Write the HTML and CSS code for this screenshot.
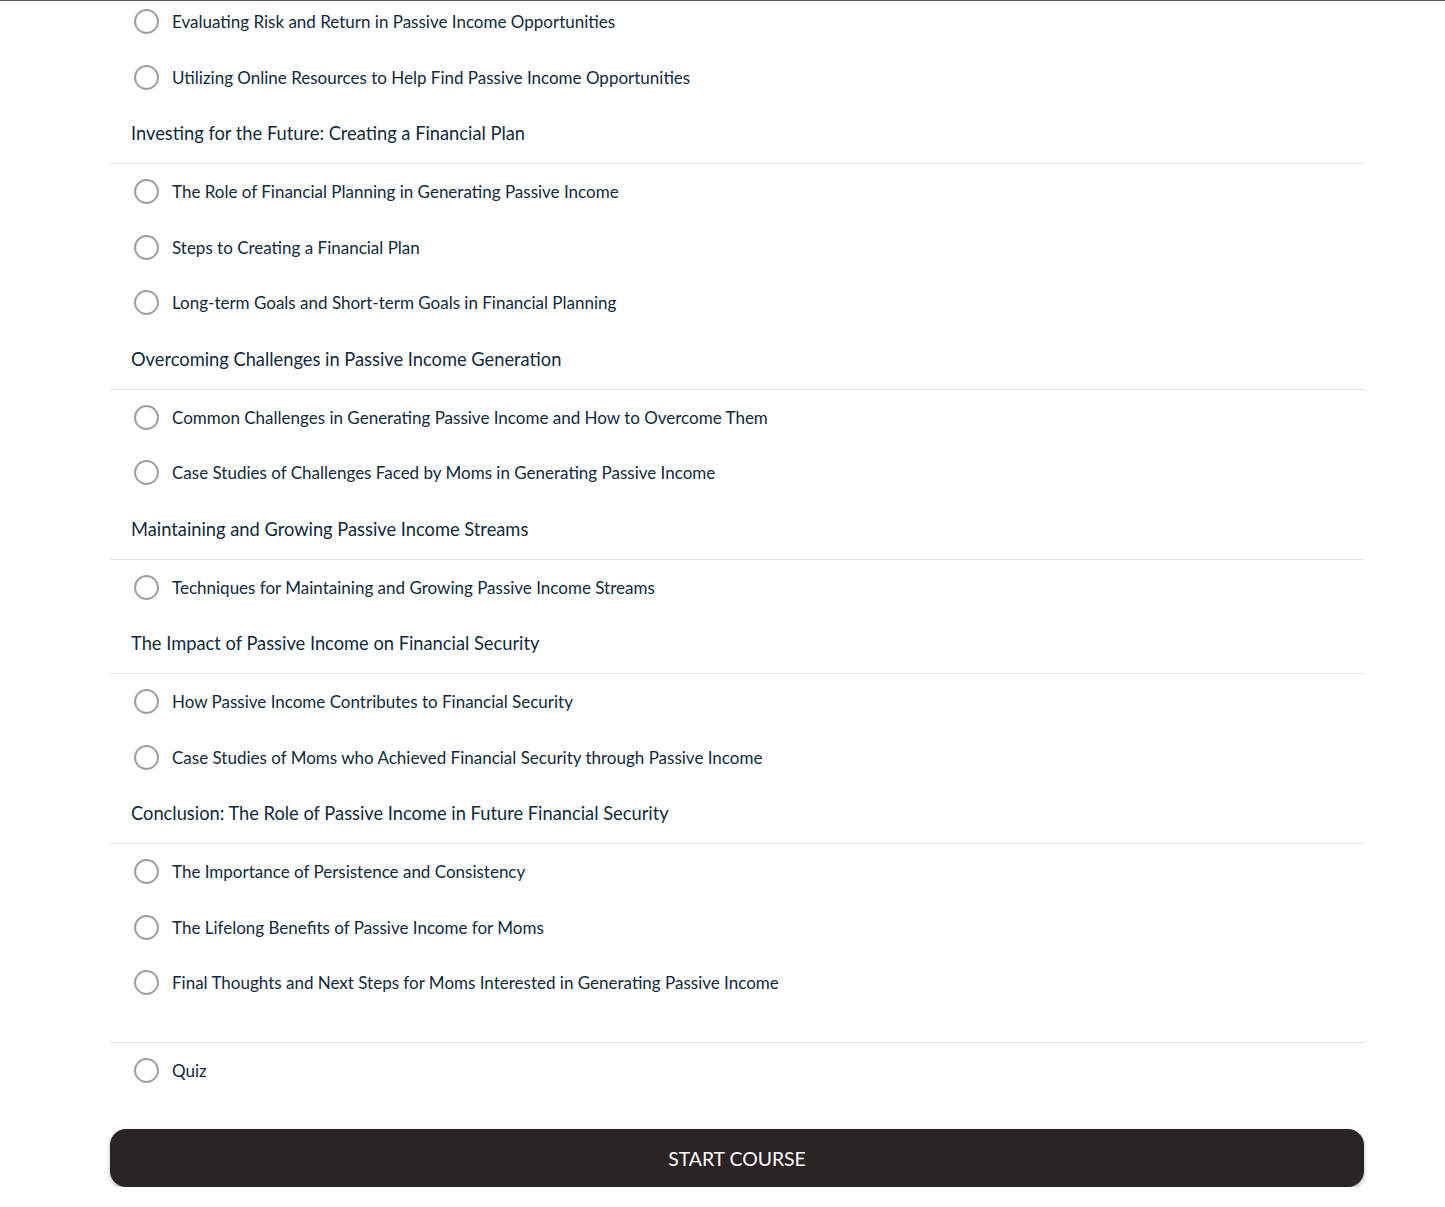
FILE: index.html
```html
<!DOCTYPE html>
<html lang="en">
<head>
    <meta charset="UTF-8">
    <meta name="viewport" content="width=device-width, initial-scale=1.0">
    <title>Course Outline</title>
    <link rel="stylesheet" href="styles.css">
</head>
<body>
    <div class="container">
        <div class="lessons">
            <div class="lesson"><span class="check"></span><span class="lesson-title">Evaluating Risk and Return in Passive Income Opportunities</span></div>
            <div class="lesson"><span class="check"></span><span class="lesson-title">Utilizing Online Resources to Help Find Passive Income Opportunities</span></div>
        </div>

        <!-- Financial plan -->
        <div class="chapter">
            <h3 class="chapter-title">Investing for the Future: Creating a Financial Plan</h3>
            <div class="lessons">
                <div class="lesson"><span class="check"></span><span class="lesson-title">The Role of Financial Planning in Generating Passive Income</span></div>
                <div class="lesson"><span class="check"></span><span class="lesson-title">Steps to Creating a Financial Plan</span></div>
                <div class="lesson"><span class="check"></span><span class="lesson-title">Long-term Goals and Short-term Goals in Financial Planning</span></div>
            </div>
        </div>

        <!-- Challenges -->
        <div class="chapter">
            <h3 class="chapter-title">Overcoming Challenges in Passive Income Generation</h3>
            <div class="lessons">
                <div class="lesson"><span class="check"></span><span class="lesson-title">Common Challenges in Generating Passive Income and How to Overcome Them</span></div>
                <div class="lesson"><span class="check"></span><span class="lesson-title">Case Studies of Challenges Faced by Moms in Generating Passive Income</span></div>
            </div>
        </div>

        <!-- Growing streams -->
        <div class="chapter">
            <h3 class="chapter-title">Maintaining and Growing Passive Income Streams</h3>
            <div class="lessons">
                <div class="lesson"><span class="check"></span><span class="lesson-title">Techniques for Maintaining and Growing Passive Income Streams</span></div>
            </div>
        </div>

        <!-- Financial security -->
        <div class="chapter">
            <h3 class="chapter-title">The Impact of Passive Income on Financial Security</h3>
            <div class="lessons">
                <div class="lesson"><span class="check"></span><span class="lesson-title">How Passive Income Contributes to Financial Security</span></div>
                <div class="lesson"><span class="check"></span><span class="lesson-title">Case Studies of Moms who Achieved Financial Security through Passive Income</span></div>
            </div>
        </div>

        <!-- Conclusion -->
        <div class="chapter">
            <h3 class="chapter-title">Conclusion: The Role of Passive Income in Future Financial Security</h3>
            <div class="lessons">
                <div class="lesson"><span class="check"></span><span class="lesson-title">The Importance of Persistence and Consistency</span></div>
                <div class="lesson"><span class="check"></span><span class="lesson-title">The Lifelong Benefits of Passive Income for Moms</span></div>
                <div class="lesson"><span class="check"></span><span class="lesson-title">Final Thoughts and Next Steps for Moms Interested in Generating Passive Income</span></div>
            </div>
        </div>

        <!-- Quiz -->
        <div class="chapter chapter-quiz">
            <div class="lessons">
                <div class="lesson"><span class="check"></span><span class="lesson-title">Quiz</span></div>
            </div>
        </div>

        <button class="start-btn" type="button">START COURSE</button>
    </div>
</body>
</html>
```

FILE: styles.css
```css
body {
    font-family: 'Lato', sans-serif;
    background-color: #fff;
    color: #0f2a3d;
    margin: 0;
    padding: 0;
    border-top: 1px solid #555;
    overflow: hidden;
}

.container {
    width: 1254px;
    margin: -7px 0 0 110px;
}

.chapter-title {
    font-size: 18.3px;
    font-weight: 400;
    line-height: 24px;
    margin: 0;
    padding: 16px 21px 18px;
    border-bottom: 1px solid #e2e2e2;
}

.lesson {
    display: flex;
    align-items: center;
    height: 55.5px;
    padding-left: 24px;
}

.check {
    width: 21px;
    height: 21px;
    border: 2px solid #a0a0a0;
    border-radius: 50%;
    flex-shrink: 0;
    margin-right: 13px;
}

.lesson-title {
    font-size: 17px;
}

.chapter-quiz {
    margin-top: 31px;
    border-top: 1px solid #e2e2e2;
}

.start-btn {
    display: block;
    width: 100%;
    height: 58px;
    margin-top: 31px;
    background-color: #2a2424;
    color: #fff;
    border: none;
    border-radius: 16px;
    font-family: 'Lato', sans-serif;
    font-size: 19.4px;
    box-shadow: 0 2px 4px rgba(0, 0, 0, 0.3);
    cursor: pointer;
}
```
